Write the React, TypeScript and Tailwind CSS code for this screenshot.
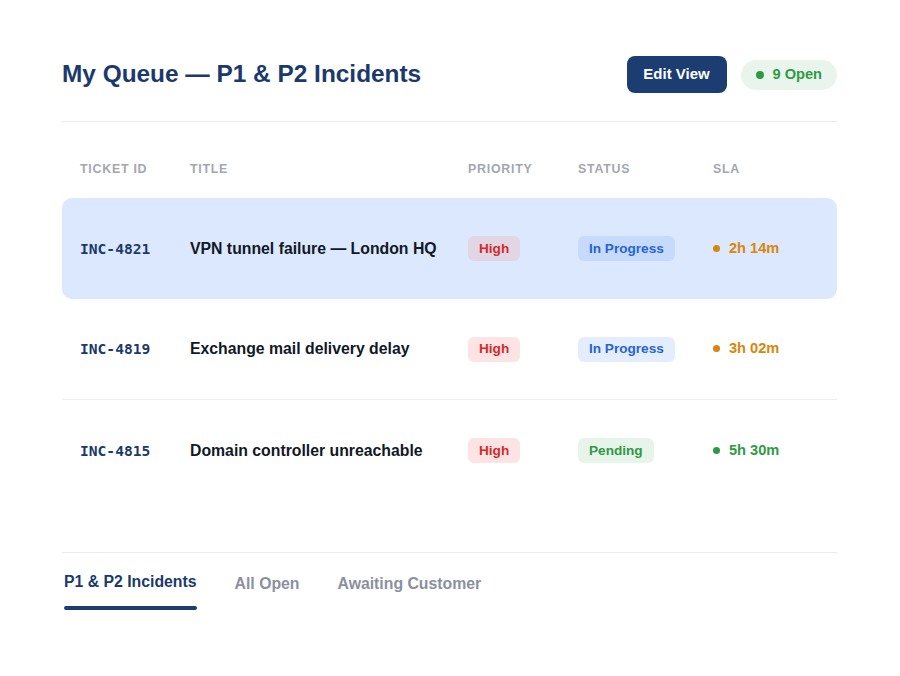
import React from 'react'

type Row = {
  id: string
  title: string
  status: 'In Progress' | 'Pending'
  sla: string
  slaTone: 'amber' | 'green'
  active?: boolean
}

const rows: Row[] = [
  { id: 'INC-4821', title: 'VPN tunnel failure — London HQ', status: 'In Progress', sla: '2h 14m', slaTone: 'amber', active: true },
  { id: 'INC-4819', title: 'Exchange mail delivery delay', status: 'In Progress', sla: '3h 02m', slaTone: 'amber' },
  { id: 'INC-4815', title: 'Domain controller unreachable', status: 'Pending', sla: '5h 30m', slaTone: 'green' },
]

const cols = 'grid grid-cols-[110px_278px_110px_135px_1fr] items-center px-[18px]'

function StatusBadge({ status, active }: { status: Row['status']; active?: boolean }) {
  if (status === 'Pending') {
    return (
      <span className="inline-flex h-[25px] items-center rounded-md bg-[#e6f4ea] px-[11px] text-[13.6px] font-bold text-[#2f9a45]">
        Pending
      </span>
    )
  }
  return (
    <span
      className={`inline-flex h-[25px] items-center rounded-md px-[11px] text-[13.6px] font-bold text-[#2563d6] ${
        active ? 'bg-[#c6dafb]' : 'bg-[#e3edfd]'
      }`}
    >
      In Progress
    </span>
  )
}

export default function App() {
  return (
    <div className="min-h-[676px] w-[900px] bg-white px-[62px] pt-[56px] font-['Liberation_Sans',Arial,sans-serif]">
      <div className="w-[775px]">
        {/* header */}
        <div className="flex h-[37px] items-center justify-between">
          <h1 className="text-[24.4px] font-bold text-[#1b3a6b]">My Queue — P1 &amp; P2 Incidents</h1>
          <div className="flex items-center gap-[14px]">
            <button className="h-[37px] w-[100px] rounded-lg bg-[#1b3d72] text-[15px] font-bold text-white">Edit View</button>
            <span className="flex h-[30px] items-center gap-[9px] rounded-full bg-[#e9f5ec] pl-[15px] pr-[15px] text-[14.6px] font-bold text-[#2f9a45]">
              <span className="h-[8px] w-[8px] rounded-full bg-[#2f9a45]" />
              9 Open
            </span>
          </div>
        </div>

        <div className="mt-[28px] border-b border-[#e8eaee]" />

        {/* column headers */}
        <div className={`${cols} pb-[21px] pt-[39px] text-[12.4px] font-bold uppercase leading-[16px] tracking-[0.06em] text-[#a3a7ae]`}>
          <span>Ticket ID</span>
          <span>Title</span>
          <span>Priority</span>
          <span>Status</span>
          <span>SLA</span>
        </div>

        {/* rows */}
        <div className="flex flex-col">
          {rows.map((r, i) => (
            <div
              key={r.id}
              className={`${cols} h-[101px] ${
                r.active ? 'rounded-[10px] bg-[#dbe8fd]' : i < rows.length - 1 ? 'border-b border-[#eceef1]' : ''
              }`}
            >
              <span className="font-['DejaVu_Sans_Mono',monospace] text-[14.6px] font-semibold text-[#1b3a6b]">{r.id}</span>
              <span className="text-[15.8px] font-bold text-[#111827]">{r.title}</span>
              <span>
                <span
                  className={`inline-flex h-[25px] items-center rounded-md px-[11px] text-[13.6px] font-bold text-[#d32a2a] ${
                    r.active ? 'bg-[#e2d6e5]' : 'bg-[#fde4e4]'
                  }`}
                >
                  High
                </span>
              </span>
              <span>
                <StatusBadge status={r.status} active={r.active} />
              </span>
              <span
                className={`flex items-center gap-[9px] text-[14.6px] font-bold ${
                  r.slaTone === 'amber' ? 'text-[#d9860b]' : 'text-[#2f9a45]'
                }`}
              >
                <span className={`h-[7px] w-[7px] rounded-full ${r.slaTone === 'amber' ? 'bg-[#d9860b]' : 'bg-[#2f9a45]'}`} />
                {r.sla}
              </span>
            </div>
          ))}
        </div>

        {/* tabs */}
        <div className="mt-[51px] border-t border-[#e8eaee]">
          <div className="flex gap-[38px] pl-[2px] pt-[19px]">
            <div className="flex flex-col">
              <span className="text-[15.8px] font-bold leading-[20px] text-[#1b3a6b]">P1 &amp; P2 Incidents</span>
              <span className="mt-[14px] h-[4px] rounded-full bg-[#1b3d72]" />
            </div>
            <span className="pt-[2px] text-[15.8px] font-bold leading-[20px] text-[#8b90a0]">All Open</span>
            <span className="pt-[2px] text-[15.8px] font-bold leading-[20px] text-[#8b90a0]">Awaiting Customer</span>
          </div>
        </div>
      </div>
    </div>
  )
}
